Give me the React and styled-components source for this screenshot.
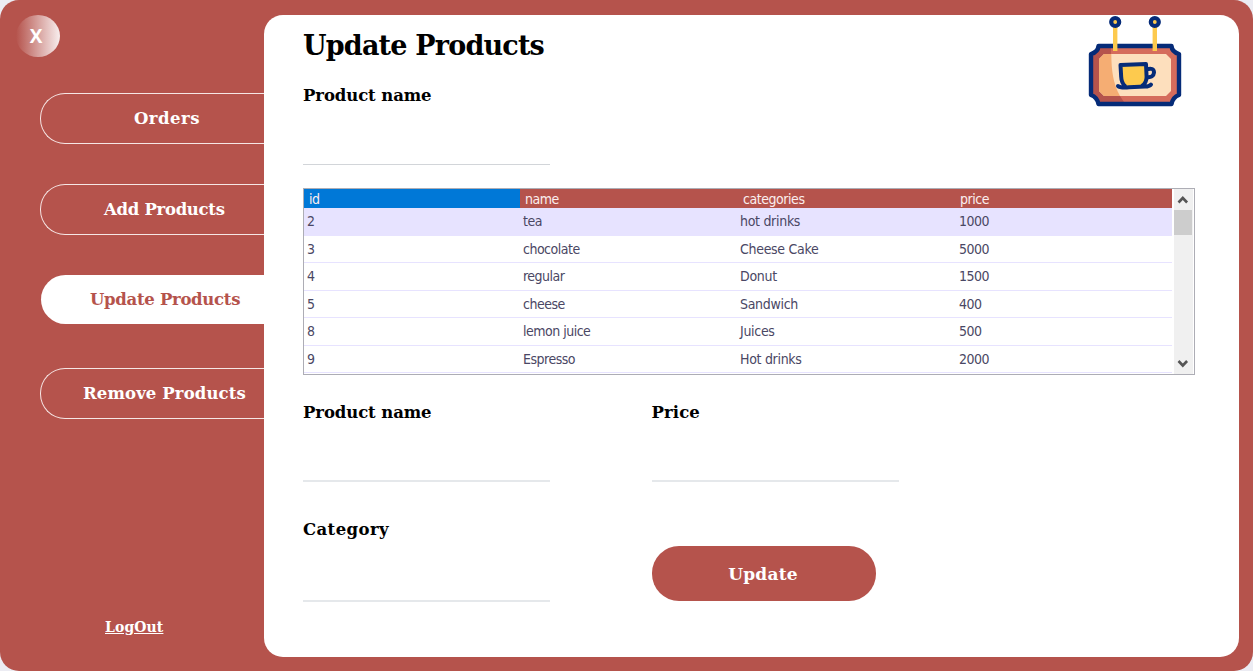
import React from "react";
import styled, { createGlobalStyle } from "styled-components";

const RED = "#b5534c";
const SLAB = '"DejaVu Serif", serif';

const Global = createGlobalStyle`
  * { box-sizing: border-box; }
  body { margin: 0; background: #ececf3; }
  button { font: inherit; cursor: pointer; }
`;

const Frame = styled.div`
  display: flex;
  width: 1253px;
  height: 671px;
  padding: 15px 14.5px 14.5px 0;
  border-radius: 19px;
  background: ${RED};
  overflow: hidden;
`;

const Sidebar = styled.aside`
  display: flex;
  flex-direction: column;
  width: 264px;
  height: 642px;
`;

const CloseButton = styled.button`
  width: 44px;
  height: 42px;
  margin: 0 0 0 16px;
  padding: 0 4px 0 0;
  border: 0;
  border-radius: 50%;
  color: #fff;
  background: linear-gradient(90deg, ${RED} 0%, #f8eeee 100%);
  font: bold 19px/42px "Open Sans", sans-serif;
  text-align: center;
`;

const Nav = styled.nav`
  display: flex;
  flex-direction: column;
  margin-top: 36px;
  padding-left: 40px;
`;

const NavButton = styled.button`
  display: flex;
  height: ${(p) => (p.$active ? 49 : 51)}px;
  margin: ${(p) => (p.$active ? "0 0 0 1px" : "0")};
  margin-bottom: ${(p) => p.$gap}px;
  padding: 0 0 0 ${(p) => p.$indent}px;
  border: ${(p) => (p.$active ? "0" : "1px solid #f6e6e5")};
  border-right: 0;
  border-radius: 25px 0 0 25px;
  color: ${(p) => (p.$active ? RED : "#fff")};
  background: ${(p) => (p.$active ? "#fff" : "transparent")};
  font: bold 16.5px/49px ${SLAB};
  letter-spacing: ${(p) => p.$track}px;
  text-align: left;
  white-space: nowrap;
`;

const LogOut = styled.a`
  margin: auto 0 20px 105px;
  color: #fff;
  font: bold 14px/20px ${SLAB};
  letter-spacing: 0.1px;
  text-decoration: underline;
`;

const Panel = styled.main`
  flex: 1;
  height: 642px;
  padding: 0 43px 0 39px;
  border-radius: 19px;
  background: #fff;
`;

const Header = styled.header`
  display: flex;
  justify-content: space-between;
  width: 892px;
  height: 173px;
  padding-right: 13px;
`;

const Title = styled.h1`
  margin: 13px 0 19px;
  color: #000;
  font: bold 27px/36px ${SLAB};
  letter-spacing: -0.8px;
  white-space: nowrap;
`;

const Field = styled.label`
  display: block;
  width: 247px;
  height: ${(p) => p.$height}px;
  border-bottom: ${(p) => p.$line || 1}px solid ${(p) => (p.$line ? "#e5e8eb" : "#d2d5d9")};
  color: #000;
  font: bold 16.5px/26px ${SLAB};
  letter-spacing: ${(p) => p.$track ?? -0.1}px;
`;

const TableBox = styled.div`
  display: flex;
  width: 892px;
  height: 187px;
  border: 1px solid #adadb5;
  font: 14px/27px "DejaVu Sans Condensed", "DejaVu Sans", sans-serif;
  overflow: hidden;
`;

const Rows = styled.div`
  width: 868px;
`;

const grid = "display: grid; grid-template-columns: 216px 217px 219px 216px;";

const HeadRow = styled.div`
  ${grid}
  grid-template-rows: 19px;
  height: 19px;
  color: #fbeeee;
  background: ${RED};
  line-height: 21px;
`;

const HeadCell = styled.div`
  padding-left: ${(p) => p.$pad}px;
  letter-spacing: -0.45px;
  background: ${(p) => (p.$selected ? "#0078d7" : "transparent")};
`;

const Row = styled.div`
  ${grid}
  height: 27.5px;
  color: #4a4764;
  background: ${(p) => (p.$selected ? "#e7e3ff" : "#fff")};
  border-bottom: 1px solid #e7e3ff;
`;

const Cell = styled.div`
  padding-left: 3px;
  letter-spacing: ${(p) => (p.$wide ? -0.3 : -0.5)}px;
`;

const ScrollBar = styled.div`
  display: flex;
  flex-direction: column;
  width: 19px;
  margin-left: 2px;
  background: #f0f0f0;
`;

const Arrow = styled.svg`
  width: 19px;
  height: 21px;
  margin-top: ${(p) => (p.$end ? "auto" : 0)};
`;

const Thumb = styled.div`
  width: 18px;
  height: 25px;
  background: #cdcdcd;
`;

const Form = styled.div`
  display: grid;
  grid-template-columns: 348.5px 248px;
  margin-top: 25px;
`;

const Column = styled.div`
  display: flex;
  flex-direction: column;
  gap: ${(p) => p.$gap}px;
`;

const UpdateButton = styled.button`
  width: 224px;
  height: 55px;
  padding: 1px 1px 0 0;
  border: 0;
  border-radius: 27px;
  color: #fff;
  background: ${RED};
  font: bold 17px/54px ${SLAB};
  letter-spacing: 0.2px;
`;

const Sign = styled.svg`
  display: block;
  width: 94px;
  height: 94px;
`;

const NAV = [
  { text: "Orders", indent: 93, gap: 40, track: 0.5 },
  { text: "Add Products", indent: 63, gap: 40, track: -0.3 },
  { text: "Update Products", indent: 49, gap: 44, track: -0.3, active: true },
  { text: "Remove Products", indent: 42, gap: 0, track: 0.12 },
];

const HEADINGS = [
  ["id", 5],
  ["name", 5],
  ["categories", 6],
  ["price", 4],
];

const PRODUCTS = [
  ["2", "tea", "hot drinks", "1000"],
  ["3", "chocolate", "Cheese Cake", "5000"],
  ["4", "regular", "Donut", "1500"],
  ["5", "cheese", "Sandwich", "400"],
  ["8", "lemon juice", "Juices", "500"],
  ["9", "Espresso", "Hot drinks", "2000"],
];

function CafeSign() {
  const board = "M1098.5 46H1171.5Q1172 52 1179 54V95Q1173 97 1171.5 104H1098.5Q1097 97 1091 95V54Q1098 52 1098.5 46Z";
  return (
    <Sign viewBox="1088 15 94 94">
      <path d={board} fill="#d56c5c" />
      <path d="M1098.5 46H1111C1110 70 1114 89 1124 102V104H1098.5Q1097 97 1091 95V54Q1098 52 1098.5 46Z" fill="#b5534c" />
      <path d="M1104 54H1166L1171 59V91L1166 96H1104L1099 91V59Z" fill="#fddfbd" />
      <path d="M1104 54H1111.3C1111.5 71 1113 83 1120 96H1104L1099 91V59Z" fill="#f5ad73" />
      <path d={board} fill="none" stroke="#052b78" strokeWidth="4.4" strokeLinejoin="round" />
      <path d="M1115.2 26V51M1154.8 26V51" stroke="#fdca4e" strokeWidth="4.4" />
      <circle cx="1115.2" cy="22" r="4" fill="#fdca4e" stroke="#052b78" strokeWidth="4.2" />
      <circle cx="1154.8" cy="22" r="4" fill="#fdca4e" stroke="#052b78" strokeWidth="4.2" />
      <path d="M1120.5 65L1146 64L1146.5 77Q1146 86 1139 86H1127Q1122 84 1121.5 78Z" fill="#fdca4e" />
      <path d="M1125 86Q1121.5 83 1121.2 77L1120.5 65L1146 64L1146.6 77Q1146.5 83 1142 86M1146.3 69.5Q1154 67 1154 72.5Q1153.5 78 1146.6 77M1118 86Q1120 88 1129 87.3L1145 86.5Q1149.5 86.5 1151 84.5" fill="none" stroke="#052b78" strokeWidth="4" strokeLinejoin="round" strokeLinecap="round" />
    </Sign>
  );
}

export default function App() {
  return (
    <>
      <Global />
      <Frame>
        <Sidebar>
          <CloseButton>X</CloseButton>
          <Nav>
            {NAV.map((n) => (
              <NavButton key={n.text} $active={n.active} $indent={n.indent} $gap={n.gap} $track={n.track}>
                {n.text}
              </NavButton>
            ))}
          </Nav>
          <LogOut>LogOut</LogOut>
        </Sidebar>
        <Panel>
          <Header>
            <div>
              <Title>Update Products</Title>
              <Field $height={82}>Product name</Field>
            </div>
            <CafeSign />
          </Header>
          <TableBox>
            <Rows>
              <HeadRow>
                {HEADINGS.map(([text, pad], i) => (
                  <HeadCell key={text} $pad={pad} $selected={i === 0}>{text}</HeadCell>
                ))}
              </HeadRow>
              {PRODUCTS.map((r, i) => (
                <Row key={r[0]} $selected={i === 0}>
                  {r.map((c, j) => <Cell key={c} $wide={j === 2}>{c}</Cell>)}
                </Row>
              ))}
            </Rows>
            <ScrollBar>
              <Arrow viewBox="0 0 19 21">
                <path d="M4.5 13.5L8.8 9L13.1 13.5" fill="none" stroke="#555" strokeWidth="2.6" />
              </Arrow>
              <Thumb />
              <Arrow $end viewBox="0 0 19 21">
                <path d="M4.5 8L8.8 12.5L13.1 8" fill="none" stroke="#555" strokeWidth="2.6" />
              </Arrow>
            </ScrollBar>
          </TableBox>
          <Form>
            <Column $gap={35}>
              <Field $height={82} $line={2}>Product name</Field>
              <Field $height={85} $line={2} $track={0.4}>Category</Field>
            </Column>
            <Column $gap={64}>
              <Field $height={82} $line={2} $track={0.1}>Price</Field>
              <UpdateButton>Update</UpdateButton>
            </Column>
          </Form>
        </Panel>
      </Frame>
    </>
  );
}
